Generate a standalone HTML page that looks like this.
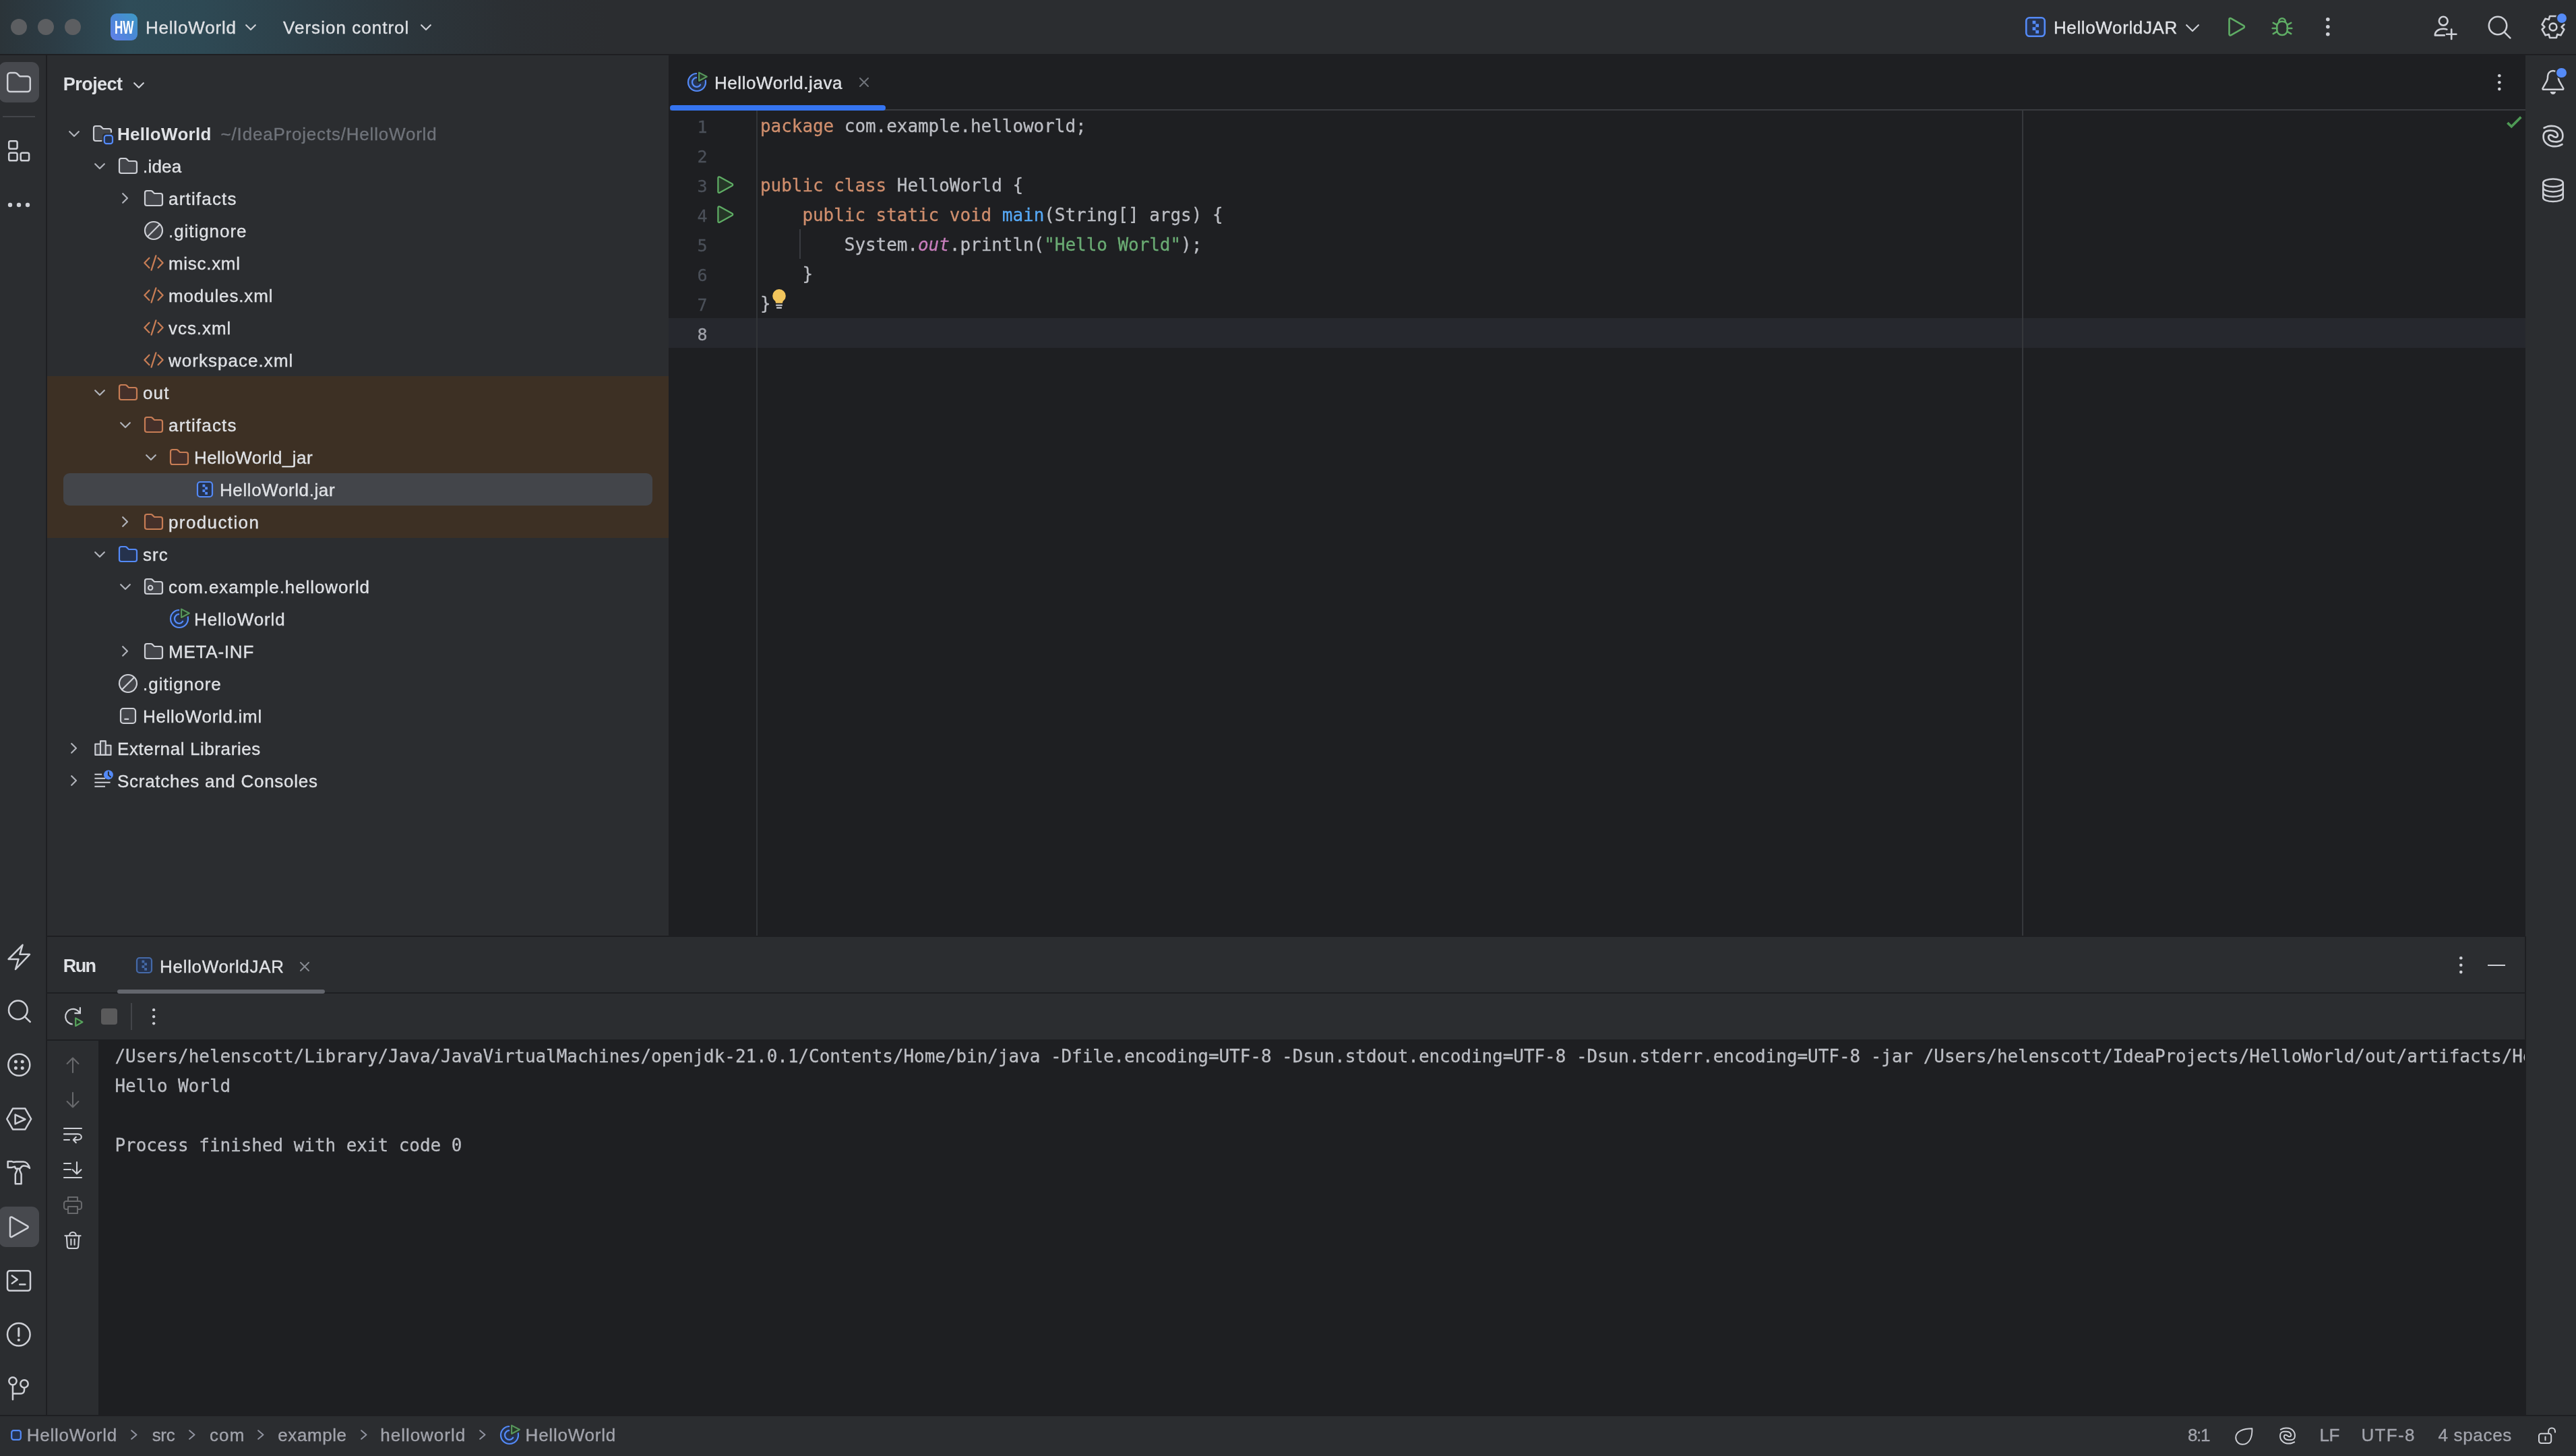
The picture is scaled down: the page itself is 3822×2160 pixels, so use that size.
<!DOCTYPE html>
<html lang="en"><head><meta charset="utf-8"><title>HelloWorld – HelloWorld.java</title>
<style>
html,body{margin:0;padding:0;}
body{width:3822px;height:2160px;background:#2b2d30;position:relative;overflow:hidden;font-family:'Liberation Sans', sans-serif;}
#r{position:absolute;left:0;top:0;width:3822px;height:2160px;will-change:transform;}
#r>div,#r>span,#r>svg{position:absolute;display:block;}
.t{white-space:pre;}
</style></head><body><div id="r">
<div style="left:0px;top:0px;width:3822px;height:80px;background:#2b2d30;background:linear-gradient(90deg,#2b3439 0px,#2c3c45 80px,#2f4c58 190px,#2e4954 300px,#2d3f48 450px,#2c363c 600px,#2b2f33 760px,#2b2d30 900px);"></div>
<div style="left:0px;top:80px;width:3822px;height:2px;background:#1e1f22;"></div>
<div style="left:68px;top:82px;width:2px;height:2018px;background:#1e1f22;"></div>
<div style="left:992px;top:82px;width:2755px;height:1308px;background:#1e1f22;"></div>
<div style="left:3746px;top:1389px;width:2px;height:711px;background:#1e1f22;"></div>
<div style="left:70px;top:1388px;width:3677px;height:2px;background:#1e1f22;"></div>
<div style="left:0px;top:2099px;width:3822px;height:2px;background:#1e1f22;"></div>
<div style="left:16px;top:28px;width:24px;height:24px;background:#5c5e61;border-radius:12px;"></div>
<div style="left:56px;top:28px;width:24px;height:24px;background:#5c5e61;border-radius:12px;"></div>
<div style="left:96px;top:28px;width:24px;height:24px;background:#5c5e61;border-radius:12px;"></div>
<div style="left:164px;top:20px;width:40px;height:40px;background:#4a86e0;border-radius:9px;background:linear-gradient(225deg,#3e9ac4 0%,#4a88d6 50%,#6380ea 100%);"></div>
<span id="t0" class="t" style="left:169.57px;top:20.8px;line-height:40px;font-size:27px;color:#ffffff;font-family:'Liberation Sans', sans-serif;font-weight:700;transform:scaleX(0.6337);transform-origin:0 0;">HW</span>
<span id="t1" class="t" style="left:215.90px;top:20.6px;line-height:40px;font-size:26px;color:#dfe1e5;font-family:'Liberation Sans', sans-serif;-webkit-text-stroke:0.35px;letter-spacing:0.821px;">HelloWorld</span>
<svg style="left:364.0px;top:35.5px;" width="16" height="10" viewBox="0 0 16 10" fill="none"><path d="M1.2 1.2 L7.999999999999999 8 L14.8 1.2" stroke="#ced0d6" stroke-width="2.2" stroke-linecap="round" stroke-linejoin="round"/></svg>
<span id="t2" class="t" style="left:420.00px;top:20.6px;line-height:40px;font-size:26px;color:#dfe1e5;font-family:'Liberation Sans', sans-serif;-webkit-text-stroke:0.35px;letter-spacing:1.028px;">Version control</span>
<svg style="left:624.0px;top:35.5px;" width="16" height="10" viewBox="0 0 16 10" fill="none"><path d="M1.2 1.2 L7.999999999999999 8 L14.8 1.2" stroke="#ced0d6" stroke-width="2.2" stroke-linecap="round" stroke-linejoin="round"/></svg>
<svg style="left:3000px;top:20px;" width="40" height="40" viewBox="0 0 16 16" fill="none"><rect x="2.5" y="2.5" width="11" height="11" rx="2" fill="#25324d" stroke="#548af7" stroke-width="1.05"/><rect x="6.25" y="4.3" width="1.9" height="1.9" fill="#548af7"/><rect x="8.1" y="6.2" width="1.9" height="1.9" fill="#548af7"/><rect x="6.25" y="8.1" width="1.9" height="1.9" fill="#548af7"/><rect x="8.1" y="9.95" width="1.9" height="1.9" fill="#548af7"/></svg>
<span id="t3" class="t" style="left:3046.90px;top:20.6px;line-height:40px;font-size:26px;color:#dfe1e5;font-family:'Liberation Sans', sans-serif;-webkit-text-stroke:0.35px;letter-spacing:0.640px;">HelloWorldJAR</span>
<svg style="left:3242.5px;top:35.5px;" width="20" height="12" viewBox="0 0 20 12" fill="none"><path d="M1.2 1.2 L10.0 10 L18.8 1.2" stroke="#ced0d6" stroke-width="2.2" stroke-linecap="round" stroke-linejoin="round"/></svg>
<svg style="left:3299px;top:20px;" width="40" height="40" viewBox="0 0 20 20" fill="none"><path d="M4.25 4.4 C4.25 3.7 5 3.3 5.6 3.65 L15 9.1 C15.6 9.45 15.6 10.3 15 10.65 L5.6 16.1 C5 16.45 4.25 16.05 4.25 15.35 Z" stroke="#5fad65" stroke-width="1.3" stroke-linejoin="round"/></svg>
<svg style="left:3366px;top:20px;" width="40" height="40" viewBox="0 0 20 20" fill="none"><g stroke="#5fad65" stroke-width="1.4" stroke-linecap="round" fill="none" transform="translate(10 10) scale(0.92) translate(-10 -10.1)"><path d="M5.8 9.6 C5.8 7.2 7.6 5.6 10 5.6 C12.4 5.6 14.2 7.2 14.2 9.6 V12.4 C14.2 14.9 12.4 16.6 10 16.6 C7.6 16.6 5.8 14.9 5.8 12.4 Z"/><path d="M7.4 5.9 C7.4 4.3 8.5 3.2 10 3.2 C11.5 3.2 12.6 4.3 12.6 5.9"/><path d="M5.8 8.4 L2.8 6.8 M5.8 11.2 H2.2 M5.8 13.8 L2.8 15.6 M14.2 8.4 L17.2 6.8 M14.2 11.2 H17.8 M14.2 13.8 L17.2 15.6"/></g></svg>
<svg style="left:3449.8999999999996px;top:25.400000000000002px;" width="7.6" height="29.6" viewBox="0 0 7.6 29.6" fill="none"><circle cx="3.8" cy="3.8" r="2.8" fill="#ced0d6"/><circle cx="3.8" cy="14.8" r="2.8" fill="#ced0d6"/><circle cx="3.8" cy="25.8" r="2.8" fill="#ced0d6"/></svg>
<svg style="left:3608px;top:20px;" width="40" height="40" viewBox="0 0 20 20" fill="none"><g stroke="#ced0d6" stroke-width="1.3" stroke-linecap="round" fill="none"><circle cx="8.6" cy="5.6" r="3.2"/><path d="M2.4 16.2 C2.4 13.2 5 11.4 8.6 11.4 C9.6 11.4 10.4 11.5 11.2 11.8 M2.4 16.2 H9.4"/><path d="M14.6 11.8 V19 M11 15.4 H18.2"/></g></svg>
<svg style="left:3688px;top:20px;" width="40" height="40" viewBox="0 0 20 20" fill="none"><g stroke="#ced0d6" stroke-width="1.3" stroke-linecap="round" fill="none"><circle cx="9" cy="9" r="6.6"/><path d="M13.9 13.9 L18.2 18.2"/></g></svg>
<svg style="left:3768px;top:20px;" width="40" height="40" viewBox="0 0 20 20" fill="none"><g stroke="#ced0d6" stroke-width="1.3" stroke-linejoin="round" fill="none"><path d="M7.52 1.98 L12.48 1.98 L13.13 4.53 L13.17 4.56 L15.71 3.84 L18.19 8.14 L16.30 9.98 L16.30 10.02 L18.19 11.86 L15.71 16.16 L13.17 15.44 L13.13 15.47 L12.48 18.02 L7.52 18.02 L6.87 15.47 L6.83 15.44 L4.29 16.16 L1.81 11.86 L3.70 10.02 L3.70 9.98 L1.81 8.14 L4.29 3.84 L6.83 4.56 L6.87 4.53 Z"/><circle cx="10" cy="10" r="2.7"/></g></svg>
<div style="left:3793.7px;top:19.7px;width:14.4px;height:14.4px;background:#548af7;border-radius:20px;border:2px solid #2b2d30;box-sizing:content-box;margin:-2px;"></div>
<div style="left:-2px;top:92px;width:60px;height:60px;background:#47494e;border-radius:11px;"></div>
<svg style="left:8px;top:102px;" width="40" height="40" viewBox="0 0 20 20" fill="none"><g stroke="#ced0d6" stroke-width="1.25" stroke-linecap="round" stroke-linejoin="round" fill="none" ><path d="M1.6 5 C1.6 3.9 2.5 3 3.6 3 H7.1 C7.7 3 8.2 3.2 8.6 3.6 L10.6 5.6 H16.4 C17.5 5.6 18.4 6.5 18.4 7.6 V15 C18.4 16.1 17.5 17 16.4 17 H3.6 C2.5 17 1.6 16.1 1.6 15 Z"/></g></svg>
<div style="left:4px;top:172px;width:48px;height:2px;background:#43454a;"></div>
<svg style="left:8px;top:204px;" width="40" height="40" viewBox="0 0 20 20" fill="none"><g stroke="#ced0d6" stroke-width="1.25" stroke-linecap="round" stroke-linejoin="round" fill="none" ><rect x="2.6" y="2.6" width="6.2" height="5.8" rx="1.2"/><rect x="2.6" y="11.35" width="6.2" height="5.8" rx="1.2"/><rect x="11.35" y="11.35" width="6.2" height="5.8" rx="1.2"/></g></svg>
<svg style="left:11px;top:299.75px;" width="34" height="8" viewBox="0 0 34 8" fill="none"><circle cx="4" cy="4" r="3.2" fill="#ced0d6"/><circle cx="17" cy="4" r="3.2" fill="#ced0d6"/><circle cx="30" cy="4" r="3.2" fill="#ced0d6"/></svg>
<svg style="left:8px;top:1400px;" width="40" height="40" viewBox="0 0 20 20" fill="none"><g stroke="#ced0d6" stroke-width="1.25" stroke-linecap="round" stroke-linejoin="round" fill="none" ><path d="M12.75 0.9 L2.3 11.5 H9.7 L7.5 19 L18 7.9 H10.7 Z"/></g></svg>
<svg style="left:8px;top:1480px;" width="40" height="40" viewBox="0 0 20 20" fill="none"><g stroke="#ced0d6" stroke-width="1.25" stroke-linecap="round" stroke-linejoin="round" fill="none" ><circle cx="9.4" cy="9.2" r="6.9"/><path d="M14.3 14.1 L18.4 18"/></g></svg>
<svg style="left:8px;top:1560px;" width="40" height="40" viewBox="0 0 20 20" fill="none"><g stroke="#ced0d6" stroke-width="1.25" stroke-linecap="round" stroke-linejoin="round" fill="none" ><circle cx="10.15" cy="9.85" r="8"/><circle cx="7.7" cy="7.449999999999999" r="1.25" fill="#ced0d6" stroke="none"/><circle cx="7.7" cy="12.25" r="1.25" fill="#ced0d6" stroke="none"/><circle cx="12.600000000000001" cy="7.449999999999999" r="1.25" fill="#ced0d6" stroke="none"/><circle cx="12.600000000000001" cy="12.25" r="1.25" fill="#ced0d6" stroke="none"/></g></svg>
<svg style="left:8px;top:1640px;" width="40" height="40" viewBox="0 0 20 20" fill="none"><g stroke="#ced0d6" stroke-width="1.25" stroke-linecap="round" stroke-linejoin="round" fill="none" ><path d="M1.1 10 L5.5 2.3 H14.7 L19.1 10 L14.7 17.7 H5.5 Z"/><path d="M7.3 6.8 V13.7 L14.7 10.25 Z"/></g></svg>
<svg style="left:8px;top:1720px;" width="40" height="40" viewBox="0 0 20 20" fill="none"><g stroke="#ced0d6" stroke-width="1.25" stroke-linecap="round" stroke-linejoin="round" fill="none" ><path d="M1.8 1.55 H4.8 L5.9 1.95 L8.1 1.7 H13.3 C15.4 1.7 17.3 3.6 18 6.5 C16.8 5.2 15.3 4.7 13.6 4.7 C12.7 4.7 12 5.2 11.5 6 L10.9 6.9 H7.6 L7 5.4 L4.8 5.95 H1.8 Z"/><path d="M8.7 6.9 V7.9 L7.4 10.9 V18.15 H11.8 V10.9 L10.55 7.9 V6.9"/></g></svg>
<div style="left:-2px;top:1790px;width:60px;height:60px;background:#47494e;border-radius:11px;"></div>
<svg style="left:8px;top:1800px;" width="40" height="40" viewBox="0 0 20 20" fill="none"><g stroke="#ced0d6" stroke-width="1.25" stroke-linecap="round" stroke-linejoin="round" fill="none" ><path d="M3.5 3.6 C3.5 2.9 4.2 2.5 4.8 2.85 L16.4 9.4 C17 9.75 17 10.55 16.4 10.9 L4.8 17.45 C4.2 17.8 3.5 17.4 3.5 16.7 Z"/></g></svg>
<svg style="left:8px;top:1880px;" width="40" height="40" viewBox="0 0 20 20" fill="none"><g stroke="#ced0d6" stroke-width="1.25" stroke-linecap="round" stroke-linejoin="round" fill="none" ><rect x="1.5" y="2.6" width="17" height="14.8" rx="1.8"/><path d="M4.9 6.2 L8.9 9.1 L4.9 12 M10.6 12.8 H14.7"/></g></svg>
<svg style="left:8px;top:1960px;" width="40" height="40" viewBox="0 0 20 20" fill="none"><g stroke="#ced0d6" stroke-width="1.25" stroke-linecap="round" stroke-linejoin="round" fill="none" ><circle cx="9.9" cy="9.85" r="8.4"/><path d="M9.9 5.3 V11" stroke-width="1.5"/><circle cx="9.9" cy="14" r="1.05" fill="#ced0d6" stroke="none"/></g></svg>
<svg style="left:8px;top:2040px;" width="40" height="40" viewBox="0 0 20 20" fill="none"><g stroke="#ced0d6" stroke-width="1.25" stroke-linecap="round" stroke-linejoin="round" fill="none" ><circle cx="5.48" cy="4.42" r="2.85"/><circle cx="14" cy="6.48" r="2.85"/><path d="M5.48 7.4 V18.1 M14 9.45 V11.3 A2.45 2.45 0 0 1 11.55 13.76 H5.6"/></g></svg>
<svg style="left:3768px;top:102px;" width="40" height="40" viewBox="0 0 20 20" fill="none"><g stroke="#ced0d6" stroke-width="1.25" stroke-linecap="round" stroke-linejoin="round" fill="none" ><path d="M2.9 15.4 H17 C17.5 15.4 17.8 14.9 17.6 14.5 L14.6 9.2 C14.1 8.2 13.9 7.4 13.9 6.4 V5.5 A3.95 3.95 0 0 0 6.0 5.5 V6.4 C6 7.4 5.8 8.2 5.3 9.2 L2.3 14.5 C2.1 14.9 2.4 15.4 2.9 15.4 Z"/><path d="M7.8 17 H12.1 C11.8 18.3 11 19.05 9.95 19.05 C8.9 19.05 8.1 18.3 7.8 17 Z" fill="#ced0d6" stroke="none"/></g></svg>
<div style="left:3793.9px;top:101.8px;width:14.2px;height:14.2px;background:#548af7;border-radius:20px;border:2.5px solid #2b2d30;box-sizing:content-box;margin:-2.5px;"></div>
<svg style="left:3768px;top:182px;" width="40" height="40" viewBox="0 0 20 20" fill="none"><g stroke="#ced0d6" stroke-width="1.25" stroke-linecap="round" stroke-linejoin="round" fill="none" ><path d="M3.30 3.89 C3.75 3.71 5.12 3.01 5.98 2.77 C6.85 2.52 7.62 2.43 8.48 2.41 C9.35 2.39 10.27 2.43 11.16 2.64 C12.05 2.86 13.07 3.25 13.84 3.71 C14.61 4.18 15.29 4.77 15.80 5.41 C16.32 6.05 16.68 6.81 16.91 7.55 C17.14 8.30 17.20 9.13 17.18 9.88 C17.16 10.62 17.06 11.42 16.79 12.02 C16.51 12.61 16.09 13.10 15.54 13.45 C14.99 13.79 14.21 13.96 13.48 14.07 C12.75 14.18 11.90 14.17 11.16 14.12 C10.42 14.08 9.63 14.02 9.02 13.80 C8.41 13.59 7.90 13.24 7.50 12.82 C7.10 12.40 6.77 11.79 6.64 11.30 C6.52 10.82 6.58 10.26 6.75 9.91 C6.92 9.56 7.32 9.31 7.68 9.21 C8.04 9.12 8.54 9.21 8.93 9.34 C9.32 9.47 9.82 9.89 10.00 10.00 M16.70 16.11 C16.25 16.29 14.88 16.99 14.02 17.23 C13.15 17.48 12.38 17.57 11.52 17.59 C10.65 17.61 9.73 17.57 8.84 17.36 C7.95 17.14 6.93 16.75 6.16 16.29 C5.39 15.82 4.71 15.23 4.20 14.59 C3.68 13.95 3.32 13.19 3.09 12.45 C2.86 11.70 2.80 10.87 2.82 10.12 C2.84 9.38 2.94 8.58 3.21 7.98 C3.49 7.39 3.91 6.90 4.46 6.55 C5.01 6.21 5.79 6.04 6.52 5.93 C7.25 5.82 8.10 5.83 8.84 5.88 C9.58 5.92 10.37 5.98 10.98 6.20 C11.59 6.41 12.10 6.76 12.50 7.18 C12.90 7.60 13.23 8.21 13.36 8.70 C13.48 9.18 13.42 9.74 13.25 10.09 C13.08 10.44 12.68 10.69 12.32 10.79 C11.96 10.88 11.46 10.79 11.07 10.66 C10.68 10.53 10.18 10.11 10.00 10.00" stroke-width="1.35"/></g></svg>
<svg style="left:3768px;top:262px;" width="40" height="40" viewBox="0 0 20 20" fill="none"><g stroke="#ced0d6" stroke-width="1.25" stroke-linecap="round" stroke-linejoin="round" fill="none" ><ellipse cx="10" cy="4.6" rx="7.4" ry="2.9"/><path d="M2.6 4.6 V15.6 C2.6 17.2 5.9 18.5 10 18.5 C14.1 18.5 17.4 17.2 17.4 15.6 V4.6"/><path d="M2.6 8.3 C2.6 9.9 5.9 11.2 10 11.2 C14.1 11.2 17.4 9.9 17.4 8.3 M2.6 12 C2.6 13.6 5.9 14.9 10 14.9 C14.1 14.9 17.4 13.6 17.4 12"/></g></svg>
<span id="t4" class="t" style="left:93.80px;top:105.0px;line-height:40px;font-size:27px;color:#dfe1e5;font-family:'Liberation Sans', sans-serif;font-weight:700;letter-spacing:-0.557px;">Project</span>
<svg style="left:197.7px;top:121.5px;" width="16" height="10" viewBox="0 0 16 10" fill="none"><path d="M1.2 1.2 L7.999999999999999 8 L14.8 1.2" stroke="#ced0d6" stroke-width="2.2" stroke-linecap="round" stroke-linejoin="round"/></svg>
<div style="left:70px;top:558px;width:922px;height:240px;background:#3d3024;"></div>
<div style="left:94px;top:702px;width:874px;height:48px;background:#43454a;border-radius:9px;"></div>
<svg style="left:102.0px;top:193.8px;" width="16" height="10" viewBox="0 0 16 10" fill="none"><path d="M1.2 1.2 L7.999999999999999 8 L14.8 1.2" stroke="#b0b3ba" stroke-width="2.2" stroke-linecap="round" stroke-linejoin="round"/></svg>
<svg style="left:135.5px;top:182px;overflow:visible;" width="32" height="32" viewBox="0 0 16 16" fill="none"><path d="M8 13.5 H3 C2.17 13.5 1.5 12.83 1.5 12 V4 C1.5 3.17 2.17 2.5 3 2.5 H5.9 C6.3 2.5 6.65 2.65 6.95 2.95 L8.5 4.5 H13 C13.83 4.5 14.5 5.17 14.5 6 V8 H10 C8.9 8 8 8.9 8 10 Z" fill="#43454a"/><path d="M7.2 13.5 H3 C2.17 13.5 1.5 12.83 1.5 12 V4 C1.5 3.17 2.17 2.5 3 2.5 H5.9 C6.3 2.5 6.65 2.65 6.95 2.95 L8.5 4.5 H13 C13.83 4.5 14.5 5.17 14.5 6 V7" stroke="#ced0d6" stroke-width="1.1" stroke-linecap="round"/><rect x="9.4" y="9.45" width="6.1" height="6.1" rx="1.6" fill="#25324d" stroke="#548af7" stroke-width="1.1"/></svg>
<span id="t5" class="t" style="left:174.00px;top:179.0px;line-height:40px;font-size:26px;color:#dfe1e5;font-family:'Liberation Sans', sans-serif;font-weight:700;letter-spacing:0.293px;">HelloWorld</span>
<span id="t6" class="t" style="left:327.60px;top:179.0px;line-height:40px;font-size:26px;color:#6f737a;font-family:'Liberation Sans', sans-serif;-webkit-text-stroke:0.35px;letter-spacing:0.801px;">~/IdeaProjects/HelloWorld</span>
<svg style="left:140.0px;top:241.8px;" width="16" height="10" viewBox="0 0 16 10" fill="none"><path d="M1.2 1.2 L7.999999999999999 8 L14.8 1.2" stroke="#b0b3ba" stroke-width="2.2" stroke-linecap="round" stroke-linejoin="round"/></svg>
<svg style="left:173.5px;top:230px;overflow:visible;" width="32" height="32" viewBox="0 0 16 16" fill="none"><path d="M1.5 4 C1.5 3.17 2.17 2.5 3 2.5 H5.9 C6.3 2.5 6.65 2.65 6.95 2.95 L8.5 4.5 H13 C13.83 4.5 14.5 5.17 14.5 6 V12 C14.5 12.83 13.83 13.5 13 13.5 H3 C2.17 13.5 1.5 12.83 1.5 12 Z" fill="#43454a" stroke="#ced0d6" stroke-width="1.1"/></svg>
<span id="t7" class="t" style="left:212.00px;top:227.0px;line-height:40px;font-size:26px;color:#dfe1e5;font-family:'Liberation Sans', sans-serif;-webkit-text-stroke:0.35px;letter-spacing:0.220px;">.idea</span>
<svg style="left:180.5px;top:286.0px;" width="10" height="16" viewBox="0 0 10 16" fill="none"><path d="M1.2 1.2 L8 8.0 L1.2 14.8" stroke="#b0b3ba" stroke-width="2.2" stroke-linecap="round" stroke-linejoin="round"/></svg>
<svg style="left:211.5px;top:278px;overflow:visible;" width="32" height="32" viewBox="0 0 16 16" fill="none"><path d="M1.5 4 C1.5 3.17 2.17 2.5 3 2.5 H5.9 C6.3 2.5 6.65 2.65 6.95 2.95 L8.5 4.5 H13 C13.83 4.5 14.5 5.17 14.5 6 V12 C14.5 12.83 13.83 13.5 13 13.5 H3 C2.17 13.5 1.5 12.83 1.5 12 Z" fill="#43454a" stroke="#ced0d6" stroke-width="1.1"/></svg>
<span id="t8" class="t" style="left:250.00px;top:275.0px;line-height:40px;font-size:26px;color:#dfe1e5;font-family:'Liberation Sans', sans-serif;-webkit-text-stroke:0.35px;letter-spacing:1.184px;">artifacts</span>
<svg style="left:211.5px;top:326px;overflow:visible;" width="32" height="32" viewBox="0 0 16 16" fill="none"><circle cx="8" cy="8" r="6.5" fill="#43454a" stroke="#ced0d6" stroke-width="1.1"/><path d="M3.5 12.5 L12.5 3.5" stroke="#ced0d6" stroke-width="1.1"/></svg>
<span id="t9" class="t" style="left:250.00px;top:323.0px;line-height:40px;font-size:26px;color:#dfe1e5;font-family:'Liberation Sans', sans-serif;-webkit-text-stroke:0.35px;letter-spacing:0.945px;">.gitignore</span>
<svg style="left:211.5px;top:374px;overflow:visible;" width="32" height="32" viewBox="0 0 16 16" fill="none"><path d="M4.7 4.4 L1.2 8 L4.7 11.6 M9.7 2.7 L6.3 13.3 M11.3 4.4 L14.8 8 L11.3 11.6" stroke="#c77d55" stroke-width="1.15" stroke-linecap="round" stroke-linejoin="round"/></svg>
<span id="t10" class="t" style="left:250.00px;top:371.0px;line-height:40px;font-size:26px;color:#dfe1e5;font-family:'Liberation Sans', sans-serif;-webkit-text-stroke:0.35px;letter-spacing:0.698px;">misc.xml</span>
<svg style="left:211.5px;top:422px;overflow:visible;" width="32" height="32" viewBox="0 0 16 16" fill="none"><path d="M4.7 4.4 L1.2 8 L4.7 11.6 M9.7 2.7 L6.3 13.3 M11.3 4.4 L14.8 8 L11.3 11.6" stroke="#c77d55" stroke-width="1.15" stroke-linecap="round" stroke-linejoin="round"/></svg>
<span id="t11" class="t" style="left:250.00px;top:419.0px;line-height:40px;font-size:26px;color:#dfe1e5;font-family:'Liberation Sans', sans-serif;-webkit-text-stroke:0.35px;letter-spacing:0.854px;">modules.xml</span>
<svg style="left:211.5px;top:470px;overflow:visible;" width="32" height="32" viewBox="0 0 16 16" fill="none"><path d="M4.7 4.4 L1.2 8 L4.7 11.6 M9.7 2.7 L6.3 13.3 M11.3 4.4 L14.8 8 L11.3 11.6" stroke="#c77d55" stroke-width="1.15" stroke-linecap="round" stroke-linejoin="round"/></svg>
<span id="t12" class="t" style="left:250.00px;top:467.0px;line-height:40px;font-size:26px;color:#dfe1e5;font-family:'Liberation Sans', sans-serif;-webkit-text-stroke:0.35px;letter-spacing:0.953px;">vcs.xml</span>
<svg style="left:211.5px;top:518px;overflow:visible;" width="32" height="32" viewBox="0 0 16 16" fill="none"><path d="M4.7 4.4 L1.2 8 L4.7 11.6 M9.7 2.7 L6.3 13.3 M11.3 4.4 L14.8 8 L11.3 11.6" stroke="#c77d55" stroke-width="1.15" stroke-linecap="round" stroke-linejoin="round"/></svg>
<span id="t13" class="t" style="left:250.00px;top:515.0px;line-height:40px;font-size:26px;color:#dfe1e5;font-family:'Liberation Sans', sans-serif;-webkit-text-stroke:0.35px;letter-spacing:1.037px;">workspace.xml</span>
<svg style="left:140.0px;top:577.8px;" width="16" height="10" viewBox="0 0 16 10" fill="none"><path d="M1.2 1.2 L7.999999999999999 8 L14.8 1.2" stroke="#b0b3ba" stroke-width="2.2" stroke-linecap="round" stroke-linejoin="round"/></svg>
<svg style="left:173.5px;top:566px;overflow:visible;" width="32" height="32" viewBox="0 0 16 16" fill="none"><path d="M1.5 4 C1.5 3.17 2.17 2.5 3 2.5 H5.9 C6.3 2.5 6.65 2.65 6.95 2.95 L8.5 4.5 H13 C13.83 4.5 14.5 5.17 14.5 6 V12 C14.5 12.83 13.83 13.5 13 13.5 H3 C2.17 13.5 1.5 12.83 1.5 12 Z" fill="#45302a" stroke="#c77d55" stroke-width="1.1"/></svg>
<span id="t14" class="t" style="left:212.00px;top:563.0px;line-height:40px;font-size:26px;color:#dfe1e5;font-family:'Liberation Sans', sans-serif;-webkit-text-stroke:0.35px;letter-spacing:1.140px;">out</span>
<svg style="left:178.0px;top:625.8px;" width="16" height="10" viewBox="0 0 16 10" fill="none"><path d="M1.2 1.2 L7.999999999999999 8 L14.8 1.2" stroke="#b0b3ba" stroke-width="2.2" stroke-linecap="round" stroke-linejoin="round"/></svg>
<svg style="left:211.5px;top:614px;overflow:visible;" width="32" height="32" viewBox="0 0 16 16" fill="none"><path d="M1.5 4 C1.5 3.17 2.17 2.5 3 2.5 H5.9 C6.3 2.5 6.65 2.65 6.95 2.95 L8.5 4.5 H13 C13.83 4.5 14.5 5.17 14.5 6 V12 C14.5 12.83 13.83 13.5 13 13.5 H3 C2.17 13.5 1.5 12.83 1.5 12 Z" fill="#45302a" stroke="#c77d55" stroke-width="1.1"/></svg>
<span id="t15" class="t" style="left:250.00px;top:611.0px;line-height:40px;font-size:26px;color:#dfe1e5;font-family:'Liberation Sans', sans-serif;-webkit-text-stroke:0.35px;letter-spacing:1.184px;">artifacts</span>
<svg style="left:216.0px;top:673.8px;" width="16" height="10" viewBox="0 0 16 10" fill="none"><path d="M1.2 1.2 L7.999999999999999 8 L14.8 1.2" stroke="#b0b3ba" stroke-width="2.2" stroke-linecap="round" stroke-linejoin="round"/></svg>
<svg style="left:249.5px;top:662px;overflow:visible;" width="32" height="32" viewBox="0 0 16 16" fill="none"><path d="M1.5 4 C1.5 3.17 2.17 2.5 3 2.5 H5.9 C6.3 2.5 6.65 2.65 6.95 2.95 L8.5 4.5 H13 C13.83 4.5 14.5 5.17 14.5 6 V12 C14.5 12.83 13.83 13.5 13 13.5 H3 C2.17 13.5 1.5 12.83 1.5 12 Z" fill="#45302a" stroke="#c77d55" stroke-width="1.1"/></svg>
<span id="t16" class="t" style="left:288.00px;top:659.0px;line-height:40px;font-size:26px;color:#dfe1e5;font-family:'Liberation Sans', sans-serif;-webkit-text-stroke:0.35px;letter-spacing:0.425px;">HelloWorld_jar</span>
<svg style="left:287.5px;top:710px;overflow:visible;" width="32" height="32" viewBox="0 0 16 16" fill="none"><rect x="2.5" y="2.5" width="11" height="11" rx="2" fill="#25324d" stroke="#548af7" stroke-width="1.1"/><rect x="6.25" y="4.3" width="1.9" height="1.9" fill="#548af7"/><rect x="8.1" y="6.2" width="1.9" height="1.9" fill="#548af7"/><rect x="6.25" y="8.1" width="1.9" height="1.9" fill="#548af7"/><rect x="8.1" y="9.95" width="1.9" height="1.9" fill="#548af7"/></svg>
<span id="t17" class="t" style="left:326.00px;top:707.0px;line-height:40px;font-size:26px;color:#dfe1e5;font-family:'Liberation Sans', sans-serif;-webkit-text-stroke:0.35px;letter-spacing:0.597px;">HelloWorld.jar</span>
<svg style="left:180.5px;top:766.0px;" width="10" height="16" viewBox="0 0 10 16" fill="none"><path d="M1.2 1.2 L8 8.0 L1.2 14.8" stroke="#b0b3ba" stroke-width="2.2" stroke-linecap="round" stroke-linejoin="round"/></svg>
<svg style="left:211.5px;top:758px;overflow:visible;" width="32" height="32" viewBox="0 0 16 16" fill="none"><path d="M1.5 4 C1.5 3.17 2.17 2.5 3 2.5 H5.9 C6.3 2.5 6.65 2.65 6.95 2.95 L8.5 4.5 H13 C13.83 4.5 14.5 5.17 14.5 6 V12 C14.5 12.83 13.83 13.5 13 13.5 H3 C2.17 13.5 1.5 12.83 1.5 12 Z" fill="#45302a" stroke="#c77d55" stroke-width="1.1"/></svg>
<span id="t18" class="t" style="left:250.00px;top:755.0px;line-height:40px;font-size:26px;color:#dfe1e5;font-family:'Liberation Sans', sans-serif;-webkit-text-stroke:0.35px;letter-spacing:1.382px;">production</span>
<svg style="left:140.0px;top:817.8px;" width="16" height="10" viewBox="0 0 16 10" fill="none"><path d="M1.2 1.2 L7.999999999999999 8 L14.8 1.2" stroke="#b0b3ba" stroke-width="2.2" stroke-linecap="round" stroke-linejoin="round"/></svg>
<svg style="left:173.5px;top:806px;overflow:visible;" width="32" height="32" viewBox="0 0 16 16" fill="none"><path d="M1.5 4 C1.5 3.17 2.17 2.5 3 2.5 H5.9 C6.3 2.5 6.65 2.65 6.95 2.95 L8.5 4.5 H13 C13.83 4.5 14.5 5.17 14.5 6 V12 C14.5 12.83 13.83 13.5 13 13.5 H3 C2.17 13.5 1.5 12.83 1.5 12 Z" fill="#25324d" stroke="#548af7" stroke-width="1.1"/></svg>
<span id="t19" class="t" style="left:212.00px;top:803.0px;line-height:40px;font-size:26px;color:#dfe1e5;font-family:'Liberation Sans', sans-serif;-webkit-text-stroke:0.35px;letter-spacing:1.071px;">src</span>
<svg style="left:178.0px;top:865.8px;" width="16" height="10" viewBox="0 0 16 10" fill="none"><path d="M1.2 1.2 L7.999999999999999 8 L14.8 1.2" stroke="#b0b3ba" stroke-width="2.2" stroke-linecap="round" stroke-linejoin="round"/></svg>
<svg style="left:211.5px;top:854px;overflow:visible;" width="32" height="32" viewBox="0 0 16 16" fill="none"><path d="M1.5 4 C1.5 3.17 2.17 2.5 3 2.5 H5.9 C6.3 2.5 6.65 2.65 6.95 2.95 L8.5 4.5 H13 C13.83 4.5 14.5 5.17 14.5 6 V12 C14.5 12.83 13.83 13.5 13 13.5 H3 C2.17 13.5 1.5 12.83 1.5 12 Z" fill="#43454a" stroke="#ced0d6" stroke-width="1.1"/><circle cx="5.6" cy="9" r="1.6" stroke="#ced0d6" stroke-width="1.05"/></svg>
<span id="t20" class="t" style="left:250.00px;top:851.0px;line-height:40px;font-size:26px;color:#dfe1e5;font-family:'Liberation Sans', sans-serif;-webkit-text-stroke:0.35px;letter-spacing:0.912px;">com.example.helloworld</span>
<svg style="left:249.5px;top:902px;overflow:visible;" width="32" height="32" viewBox="0 0 16 16" fill="none"><circle cx="8" cy="8" r="6.5" fill="#25324d" stroke="#548af7" stroke-width="1.1"/><path d="M10.55 6.1 A3.3 3.45 0 1 0 10.55 9.9" stroke="#548af7" stroke-width="1.15" stroke-linecap="round"/><path d="M9.55 0.8 V7.0 L15.4 3.9 Z" fill="#253627" stroke="#2b2d30" stroke-width="3" stroke-linejoin="round"/><path d="M9.55 0.8 V7.0 L15.4 3.9 Z" fill="#253627" stroke="#57965c" stroke-width="1.05" stroke-linejoin="round"/></svg>
<span id="t21" class="t" style="left:288.00px;top:899.0px;line-height:40px;font-size:26px;color:#dfe1e5;font-family:'Liberation Sans', sans-serif;-webkit-text-stroke:0.35px;letter-spacing:0.887px;">HelloWorld</span>
<svg style="left:180.5px;top:958.0px;" width="10" height="16" viewBox="0 0 10 16" fill="none"><path d="M1.2 1.2 L8 8.0 L1.2 14.8" stroke="#b0b3ba" stroke-width="2.2" stroke-linecap="round" stroke-linejoin="round"/></svg>
<svg style="left:211.5px;top:950px;overflow:visible;" width="32" height="32" viewBox="0 0 16 16" fill="none"><path d="M1.5 4 C1.5 3.17 2.17 2.5 3 2.5 H5.9 C6.3 2.5 6.65 2.65 6.95 2.95 L8.5 4.5 H13 C13.83 4.5 14.5 5.17 14.5 6 V12 C14.5 12.83 13.83 13.5 13 13.5 H3 C2.17 13.5 1.5 12.83 1.5 12 Z" fill="#43454a" stroke="#ced0d6" stroke-width="1.1"/></svg>
<span id="t22" class="t" style="left:250.00px;top:947.0px;line-height:40px;font-size:26px;color:#dfe1e5;font-family:'Liberation Sans', sans-serif;-webkit-text-stroke:0.35px;letter-spacing:0.778px;">META-INF</span>
<svg style="left:173.5px;top:998px;overflow:visible;" width="32" height="32" viewBox="0 0 16 16" fill="none"><circle cx="8" cy="8" r="6.5" fill="#43454a" stroke="#ced0d6" stroke-width="1.1"/><path d="M3.5 12.5 L12.5 3.5" stroke="#ced0d6" stroke-width="1.1"/></svg>
<span id="t23" class="t" style="left:212.00px;top:995.0px;line-height:40px;font-size:26px;color:#dfe1e5;font-family:'Liberation Sans', sans-serif;-webkit-text-stroke:0.35px;letter-spacing:0.978px;">.gitignore</span>
<svg style="left:173.5px;top:1046px;overflow:visible;" width="32" height="32" viewBox="0 0 16 16" fill="none"><rect x="2.5" y="2.5" width="11" height="11" rx="2" fill="#43454a" stroke="#ced0d6" stroke-width="1.1"/><path d="M5.2 10.4 H8.6" stroke="#ced0d6" stroke-width="1.1"/></svg>
<span id="t24" class="t" style="left:212.00px;top:1043.0px;line-height:40px;font-size:26px;color:#dfe1e5;font-family:'Liberation Sans', sans-serif;-webkit-text-stroke:0.35px;letter-spacing:0.698px;">HelloWorld.iml</span>
<svg style="left:104.5px;top:1102.0px;" width="10" height="16" viewBox="0 0 10 16" fill="none"><path d="M1.2 1.2 L8 8.0 L1.2 14.8" stroke="#b0b3ba" stroke-width="2.2" stroke-linecap="round" stroke-linejoin="round"/></svg>
<svg style="left:135.5px;top:1094px;overflow:visible;" width="32" height="32" viewBox="0 0 16 16" fill="none"><g stroke="#ced0d6" stroke-width="1.05" fill="#43454a" stroke-linejoin="round"><rect x="2.65" y="4.9" width="3.85" height="8.05"/><rect x="6.5" y="2.7" width="3.9" height="10.25"/><rect x="10.4" y="5.9" width="3.85" height="7.05"/></g></svg>
<span id="t25" class="t" style="left:174.00px;top:1091.0px;line-height:40px;font-size:26px;color:#dfe1e5;font-family:'Liberation Sans', sans-serif;-webkit-text-stroke:0.35px;letter-spacing:0.588px;">External Libraries</span>
<svg style="left:104.5px;top:1150.0px;" width="10" height="16" viewBox="0 0 10 16" fill="none"><path d="M1.2 1.2 L8 8.0 L1.2 14.8" stroke="#b0b3ba" stroke-width="2.2" stroke-linecap="round" stroke-linejoin="round"/></svg>
<svg style="left:135.5px;top:1142px;overflow:visible;" width="32" height="32" viewBox="0 0 16 16" fill="none"><path d="M2.2 3.4 H7.6 M2.2 6.4 H10 M2.2 9.4 H13.8 M2.2 12.4 H10" stroke="#ced0d6" stroke-width="1.05"/><circle cx="12.45" cy="3.7" r="3.5" fill="#548af7"/><path d="M12.45 1.6 V3.9 L14 5.2" stroke="#2b2d30" stroke-width="1" stroke-linecap="round" stroke-linejoin="round"/></svg>
<span id="t26" class="t" style="left:174.00px;top:1139.0px;line-height:40px;font-size:26px;color:#dfe1e5;font-family:'Liberation Sans', sans-serif;-webkit-text-stroke:0.35px;letter-spacing:0.718px;">Scratches and Consoles</span>
<svg style="left:1018px;top:106.1px;overflow:visible;" width="32" height="32" viewBox="0 0 16 16" fill="none"><circle cx="8" cy="8" r="6.5" fill="#25324d" stroke="#548af7" stroke-width="1.1"/><path d="M10.55 6.1 A3.3 3.45 0 1 0 10.55 9.9" stroke="#548af7" stroke-width="1.15" stroke-linecap="round"/><path d="M9.55 0.8 V7.0 L15.4 3.9 Z" fill="#253627" stroke="#1e1f22" stroke-width="3" stroke-linejoin="round"/><path d="M9.55 0.8 V7.0 L15.4 3.9 Z" fill="#253627" stroke="#57965c" stroke-width="1.05" stroke-linejoin="round"/></svg>
<span id="t27" class="t" style="left:1060.00px;top:103.0px;line-height:40px;font-size:26px;color:#dfe1e5;font-family:'Liberation Sans', sans-serif;-webkit-text-stroke:0.35px;letter-spacing:0.562px;">HelloWorld.java</span>
<svg style="left:1275.0px;top:115.4px;" width="14" height="14" viewBox="0 0 14 14" fill="none"><path d="M1 1 L13 13 M13 1 L1 13" stroke="#6f737a" stroke-width="2" stroke-linecap="round"/></svg>
<div style="left:994px;top:162px;width:2753px;height:2px;background:#393b40;"></div>
<div style="left:994px;top:156px;width:320px;height:8px;background:#3574f0;border-radius:4px;"></div>
<svg style="left:3704.5px;top:109.2px;" width="6.6" height="26.4" viewBox="0 0 6.6 26.4" fill="none"><circle cx="3.3" cy="3.3" r="2.3" fill="#ced0d6"/><circle cx="3.3" cy="13.2" r="2.3" fill="#ced0d6"/><circle cx="3.3" cy="23.1" r="2.3" fill="#ced0d6"/></svg>
<div style="left:992px;top:472px;width:2755px;height:44px;background:#26282e;"></div>
<div style="left:1122px;top:164px;width:2px;height:1224px;background:#313438;"></div>
<div style="left:3000px;top:164px;width:2px;height:1224px;background:#36383c;"></div>
<div style="left:1186px;top:340px;width:2px;height:44px;background:#393b40;"></div>
<span class="t" style="left:989.5px;width:60px;text-align:right;top:166.6px;line-height:44px;font-size:25px;color:#4b5059;font-family:'DejaVu Sans Mono', 'Liberation Mono', monospace;letter-spacing:-0.0533px;-webkit-text-stroke:0.3px;">1</span>
<span class="t" style="left:1128px;top:165.0px;line-height:44px;font-size:26px;color:#bcbec4;font-family:'DejaVu Sans Mono', 'Liberation Mono', monospace;letter-spacing:-0.0533px;-webkit-text-stroke:0.3px;"><span style="color:#cf8e6d;">package</span> com.example.helloworld;</span>
<span class="t" style="left:989.5px;width:60px;text-align:right;top:210.6px;line-height:44px;font-size:25px;color:#4b5059;font-family:'DejaVu Sans Mono', 'Liberation Mono', monospace;letter-spacing:-0.0533px;-webkit-text-stroke:0.3px;">2</span>
<span class="t" style="left:989.5px;width:60px;text-align:right;top:254.6px;line-height:44px;font-size:25px;color:#4b5059;font-family:'DejaVu Sans Mono', 'Liberation Mono', monospace;letter-spacing:-0.0533px;-webkit-text-stroke:0.3px;">3</span>
<span class="t" style="left:1128px;top:253.0px;line-height:44px;font-size:26px;color:#bcbec4;font-family:'DejaVu Sans Mono', 'Liberation Mono', monospace;letter-spacing:-0.0533px;-webkit-text-stroke:0.3px;"><span style="color:#cf8e6d;">public class</span> HelloWorld <span style="position:relative;top:-1.5px">{</span></span>
<span class="t" style="left:989.5px;width:60px;text-align:right;top:298.6px;line-height:44px;font-size:25px;color:#4b5059;font-family:'DejaVu Sans Mono', 'Liberation Mono', monospace;letter-spacing:-0.0533px;-webkit-text-stroke:0.3px;">4</span>
<span class="t" style="left:1128px;top:297.0px;line-height:44px;font-size:26px;color:#bcbec4;font-family:'DejaVu Sans Mono', 'Liberation Mono', monospace;letter-spacing:-0.0533px;-webkit-text-stroke:0.3px;">    <span style="color:#cf8e6d;">public static void</span> <span style="color:#56a8f5;">main</span><span style="position:relative;top:-1.5px">(</span>String<span style="position:relative;top:-1.5px">[]</span> args<span style="position:relative;top:-1.5px">)</span> <span style="position:relative;top:-1.5px">{</span></span>
<span class="t" style="left:989.5px;width:60px;text-align:right;top:342.6px;line-height:44px;font-size:25px;color:#4b5059;font-family:'DejaVu Sans Mono', 'Liberation Mono', monospace;letter-spacing:-0.0533px;-webkit-text-stroke:0.3px;">5</span>
<span class="t" style="left:1128px;top:341.0px;line-height:44px;font-size:26px;color:#bcbec4;font-family:'DejaVu Sans Mono', 'Liberation Mono', monospace;letter-spacing:-0.0533px;-webkit-text-stroke:0.3px;">        System.<span style="color:#c77dbb;font-style:italic;">out</span>.println<span style="position:relative;top:-1.5px">(</span><span style="color:#6aab73;">"Hello World"</span><span style="position:relative;top:-1.5px">)</span>;</span>
<span class="t" style="left:989.5px;width:60px;text-align:right;top:386.6px;line-height:44px;font-size:25px;color:#4b5059;font-family:'DejaVu Sans Mono', 'Liberation Mono', monospace;letter-spacing:-0.0533px;-webkit-text-stroke:0.3px;">6</span>
<span class="t" style="left:1128px;top:385.0px;line-height:44px;font-size:26px;color:#bcbec4;font-family:'DejaVu Sans Mono', 'Liberation Mono', monospace;letter-spacing:-0.0533px;-webkit-text-stroke:0.3px;">    <span style="position:relative;top:-1.5px">}</span></span>
<span class="t" style="left:989.5px;width:60px;text-align:right;top:430.6px;line-height:44px;font-size:25px;color:#4b5059;font-family:'DejaVu Sans Mono', 'Liberation Mono', monospace;letter-spacing:-0.0533px;-webkit-text-stroke:0.3px;">7</span>
<span class="t" style="left:1128px;top:429.0px;line-height:44px;font-size:26px;color:#bcbec4;font-family:'DejaVu Sans Mono', 'Liberation Mono', monospace;letter-spacing:-0.0533px;-webkit-text-stroke:0.3px;"><span style="position:relative;top:-1.5px">}</span></span>
<span class="t" style="left:989.5px;width:60px;text-align:right;top:474.6px;line-height:44px;font-size:25px;color:#a1a3ab;font-family:'DejaVu Sans Mono', 'Liberation Mono', monospace;letter-spacing:-0.0533px;-webkit-text-stroke:0.3px;">8</span>
<svg style="left:1059.7px;top:257.8px;" width="32" height="32" viewBox="0 0 16 16" fill="none"><path d="M2.3 2.6 C2.3 1.9 3 1.5 3.6 1.85 L13.6 7.35 C14.2 7.7 14.2 8.5 13.6 8.85 L3.6 14.35 C3 14.7 2.3 14.3 2.3 13.6 Z" fill="#253627" stroke="#5fad65" stroke-width="1.2" stroke-linejoin="round" transform="translate(8 8) scale(0.93) translate(-8 -8)"/></svg>
<svg style="left:1059.7px;top:301.8px;" width="32" height="32" viewBox="0 0 16 16" fill="none"><path d="M2.3 2.6 C2.3 1.9 3 1.5 3.6 1.85 L13.6 7.35 C14.2 7.7 14.2 8.5 13.6 8.85 L3.6 14.35 C3 14.7 2.3 14.3 2.3 13.6 Z" fill="#253627" stroke="#5fad65" stroke-width="1.2" stroke-linejoin="round" transform="translate(8 8) scale(0.93) translate(-8 -8)"/></svg>
<svg style="left:1140px;top:428px;" width="32" height="32" viewBox="0 0 32 32" fill="none"><circle cx="16" cy="10.9" r="9.8" fill="#f2c55c"/><path d="M9.6 16 L11.1 21.7 H20.9 L22.4 16 Z" fill="#f2c55c"/><path d="M11.2 24.8 H20.8 M12.1 28.6 H19.9" stroke="#ced0d6" stroke-width="2.1"/></svg>
<svg style="left:3717.5px;top:170.5px;" width="25" height="20" viewBox="-1 -1 23 18.4" fill="none"><path d="M1.2 9.2 L6.6 14.4 L19.6 1.4" stroke="#4e9a55" stroke-width="3.4" stroke-linecap="butt" stroke-linejoin="miter"/></svg>
<span id="t28" class="t" style="left:93.70px;top:1413.0px;line-height:40px;font-size:27px;color:#dfe1e5;font-family:'Liberation Sans', sans-serif;font-weight:700;letter-spacing:-1.546px;">Run</span>
<svg style="left:198px;top:1416px;" width="32" height="32" viewBox="0 0 16 16" fill="none"><rect x="2.5" y="2.5" width="11" height="11" rx="2" fill="#25324d" stroke="#456aa8" stroke-width="1.1"/><rect x="6.25" y="4.3" width="1.9" height="1.9" fill="#456aa8"/><rect x="8.1" y="6.2" width="1.9" height="1.9" fill="#456aa8"/><rect x="6.25" y="8.1" width="1.9" height="1.9" fill="#456aa8"/><rect x="8.1" y="9.95" width="1.9" height="1.9" fill="#456aa8"/></svg>
<span id="t29" class="t" style="left:237.10px;top:1414.0px;line-height:40px;font-size:26px;color:#dfe1e5;font-family:'Liberation Sans', sans-serif;-webkit-text-stroke:0.35px;letter-spacing:0.674px;">HelloWorldJAR</span>
<svg style="left:444.5px;top:1427.0px;" width="14" height="14" viewBox="0 0 14 14" fill="none"><path d="M1 1 L13 13 M13 1 L1 13" stroke="#868a91" stroke-width="2" stroke-linecap="round"/></svg>
<div style="left:70px;top:1472px;width:3676px;height:2px;background:#1e1f22;"></div>
<div style="left:174.3px;top:1468px;width:307.8px;height:6px;background:#63666d;border-radius:3px;"></div>
<svg style="left:3648.2999999999997px;top:1418.3px;" width="6.6" height="27.4" viewBox="0 0 6.6 27.4" fill="none"><circle cx="3.3" cy="3.3" r="2.3" fill="#ced0d6"/><circle cx="3.3" cy="13.7" r="2.3" fill="#ced0d6"/><circle cx="3.3" cy="24.1" r="2.3" fill="#ced0d6"/></svg>
<div style="left:3691px;top:1431px;width:26px;height:2px;background:#ced0d6;"></div>
<svg style="left:93px;top:1491px;" width="32" height="32" viewBox="0 0 16 16" fill="none"><g stroke="#ced0d6" stroke-width="1.1" stroke-linecap="butt" stroke-linejoin="miter" fill="none"><path d="M12.85 6.27 A5.65 5.65 0 1 0 7.40 14.24"/><path d="M12.95 1.6 V6.1 H8.7"/></g><path d="M9.6 9.7 V15.5 L14.7 12.6 Z" fill="#253627" stroke="#57a35d" stroke-width="1.1" stroke-linejoin="round"/></svg>
<div style="left:150px;top:1496px;width:24px;height:24px;background:#5a5a5b;border-radius:4px;"></div>
<div style="left:194px;top:1488px;width:2px;height:40px;background:#43454a;"></div>
<svg style="left:224.85px;top:1494.75px;" width="6.3" height="26.5" viewBox="0 0 6.3 26.5" fill="none"><circle cx="3.15" cy="3.15" r="2.15" fill="#ced0d6"/><circle cx="3.15" cy="13.25" r="2.15" fill="#ced0d6"/><circle cx="3.15" cy="23.349999999999998" r="2.15" fill="#ced0d6"/></svg>
<div style="left:146px;top:1542px;width:3600px;height:557px;background:#1e1f22;"></div>
<div style="left:70px;top:1542px;width:76px;height:2px;background:#1e1f22;"></div>
<span class="t" style="left:170.5px;width:3575.5px;overflow:hidden;top:1545.4px;line-height:44px;font-size:26px;color:#bcbec4;font-family:'DejaVu Sans Mono', 'Liberation Mono', monospace;letter-spacing:-0.0533px;-webkit-text-stroke:0.3px;">/Users/helenscott/Library/Java/JavaVirtualMachines/openjdk-21.0.1/Contents/Home/bin/java -Dfile.encoding=UTF-8 -Dsun.stdout.encoding=UTF-8 -Dsun.stderr.encoding=UTF-8 -jar /Users/helenscott/IdeaProjects/HelloWorld/out/artifacts/HelloWorld_jar/HelloWorld.jar</span>
<span class="t" style="left:170.5px;width:3575.5px;overflow:hidden;top:1589.4px;line-height:44px;font-size:26px;color:#bcbec4;font-family:'DejaVu Sans Mono', 'Liberation Mono', monospace;letter-spacing:-0.0533px;-webkit-text-stroke:0.3px;">Hello World</span>
<span class="t" style="left:170.5px;width:3575.5px;overflow:hidden;top:1677.4px;line-height:44px;font-size:26px;color:#bcbec4;font-family:'DejaVu Sans Mono', 'Liberation Mono', monospace;letter-spacing:-0.0533px;-webkit-text-stroke:0.3px;">Process finished with exit code 0</span>
<svg style="left:92px;top:1564px;" width="32" height="32" viewBox="0 0 16 16" fill="none"><g stroke="#68696c" stroke-width="1.05" stroke-linecap="round" stroke-linejoin="round" fill="none"><path d="M8 13.5 V2.8 M3.8 7 L8 2.8 L12.2 7"/></g></svg>
<svg style="left:92px;top:1616px;" width="32" height="32" viewBox="0 0 16 16" fill="none"><g stroke="#68696c" stroke-width="1.05" stroke-linecap="round" stroke-linejoin="round" fill="none"><path d="M8 2.5 V13.2 M3.8 9 L8 13.2 L12.2 9"/></g></svg>
<svg style="left:92px;top:1668px;" width="32" height="32" viewBox="0 0 16 16" fill="none"><g stroke="#ced0d6" stroke-width="1.05" stroke-linecap="round" stroke-linejoin="round" fill="none"><path d="M1.5 3 H14.5 M1.5 11.5 H5.5 M1.5 7.2 H11.8 C13.3 7.2 14.4 8.2 14.4 9.4 C14.4 10.6 13.3 11.5 11.8 11.5 H8.6 M10.4 9.4 L8.4 11.5 L10.4 13.6"/></g></svg>
<svg style="left:92px;top:1720px;" width="32" height="32" viewBox="0 0 16 16" fill="none"><g stroke="#ced0d6" stroke-width="1.05" stroke-linecap="round" stroke-linejoin="round" fill="none"><path d="M1.5 3 H6.5 M1.5 7.5 H6.5 M1.5 13.5 H14.5 M11 2 V10.6 M7.8 7.6 L11 10.8 L14.2 7.6"/></g></svg>
<svg style="left:92px;top:1772px;" width="32" height="32" viewBox="0 0 16 16" fill="none"><g stroke="#68696c" stroke-width="1.05" stroke-linecap="round" stroke-linejoin="round" fill="none"><path d="M4.5 5 V2 H11.5 V5 M4.5 11 H3 C2.2 11 1.5 10.3 1.5 9.5 V6.5 C1.5 5.7 2.2 5 3 5 H13 C13.8 5 14.5 5.7 14.5 6.5 V9.5 C14.5 10.3 13.8 11 13 11 H11.5 M4.5 9 H11.5 V14 H4.5 Z"/></g></svg>
<svg style="left:92px;top:1824px;" width="32" height="32" viewBox="0 0 16 16" fill="none"><g stroke="#ced0d6" stroke-width="1.05" stroke-linecap="round" stroke-linejoin="round" fill="none"><path d="M2.2 4.6 H13.8 M5.6 4.4 C5.6 3 6.6 2 8 2 C9.4 2 10.4 3 10.4 4.4 M3.4 4.8 L3.9 12.6 C4 13.4 4.6 14 5.4 14 H10.6 C11.4 14 12 13.4 12.1 12.6 L12.6 4.8 M6.7 7.2 V11.4 M9.3 7.2 V11.4"/></g></svg>
<svg style="left:16px;top:2120.5px;" width="16" height="16" viewBox="0 0 16 16" fill="none"><rect x="1.2" y="1.2" width="13.6" height="13.6" rx="3" fill="#25324d" stroke="#548af7" stroke-width="2.2"/></svg>
<span id="t30" class="t" style="left:39.70px;top:2109.0px;line-height:40px;font-size:26px;color:#a1a3ab;font-family:'Liberation Sans', sans-serif;-webkit-text-stroke:0.35px;letter-spacing:0.754px;">HelloWorld</span>
<span id="t31" class="t" style="left:225.70px;top:2109.0px;line-height:40px;font-size:26px;color:#a1a3ab;font-family:'Liberation Sans', sans-serif;-webkit-text-stroke:0.35px;letter-spacing:-0.329px;">src</span>
<span id="t32" class="t" style="left:310.90px;top:2109.0px;line-height:40px;font-size:26px;color:#a1a3ab;font-family:'Liberation Sans', sans-serif;-webkit-text-stroke:0.35px;letter-spacing:1.170px;">com</span>
<span id="t33" class="t" style="left:412.30px;top:2109.0px;line-height:40px;font-size:26px;color:#a1a3ab;font-family:'Liberation Sans', sans-serif;-webkit-text-stroke:0.35px;letter-spacing:0.564px;">example</span>
<span id="t34" class="t" style="left:564.30px;top:2109.0px;line-height:40px;font-size:26px;color:#a1a3ab;font-family:'Liberation Sans', sans-serif;-webkit-text-stroke:0.35px;letter-spacing:0.977px;">helloworld</span>
<svg style="left:194.25px;top:2120.8px;" width="10.5" height="15" viewBox="0 0 10.5 15" fill="none"><path d="M1.2 1.2 L8.5 7.5 L1.2 13.8" stroke="#9194a0" stroke-width="2" stroke-linecap="round" stroke-linejoin="round"/></svg>
<svg style="left:280.25px;top:2120.8px;" width="10.5" height="15" viewBox="0 0 10.5 15" fill="none"><path d="M1.2 1.2 L8.5 7.5 L1.2 13.8" stroke="#9194a0" stroke-width="2" stroke-linecap="round" stroke-linejoin="round"/></svg>
<svg style="left:382.25px;top:2120.8px;" width="10.5" height="15" viewBox="0 0 10.5 15" fill="none"><path d="M1.2 1.2 L8.5 7.5 L1.2 13.8" stroke="#9194a0" stroke-width="2" stroke-linecap="round" stroke-linejoin="round"/></svg>
<svg style="left:534.85px;top:2120.8px;" width="10.5" height="15" viewBox="0 0 10.5 15" fill="none"><path d="M1.2 1.2 L8.5 7.5 L1.2 13.8" stroke="#9194a0" stroke-width="2" stroke-linecap="round" stroke-linejoin="round"/></svg>
<svg style="left:710.75px;top:2120.8px;" width="10.5" height="15" viewBox="0 0 10.5 15" fill="none"><path d="M1.2 1.2 L8.5 7.5 L1.2 13.8" stroke="#9194a0" stroke-width="2" stroke-linecap="round" stroke-linejoin="round"/></svg>
<svg style="left:740px;top:2112.5px;overflow:visible;" width="32" height="32" viewBox="0 0 16 16" fill="none"><circle cx="8" cy="8" r="6.5" fill="#25324d" stroke="#548af7" stroke-width="1.1"/><path d="M10.55 6.1 A3.3 3.45 0 1 0 10.55 9.9" stroke="#548af7" stroke-width="1.15" stroke-linecap="round"/><path d="M9.55 0.8 V7.0 L15.4 3.9 Z" fill="#253627" stroke="#2b2d30" stroke-width="3" stroke-linejoin="round"/><path d="M9.55 0.8 V7.0 L15.4 3.9 Z" fill="#253627" stroke="#57965c" stroke-width="1.05" stroke-linejoin="round"/></svg>
<span id="t35" class="t" style="left:779.60px;top:2109.0px;line-height:40px;font-size:26px;color:#a1a3ab;font-family:'Liberation Sans', sans-serif;-webkit-text-stroke:0.35px;letter-spacing:0.765px;">HelloWorld</span>
<span id="t36" class="t" style="left:3246.00px;top:2109.0px;line-height:40px;font-size:26px;color:#a1a3ab;font-family:'Liberation Sans', sans-serif;-webkit-text-stroke:0.35px;letter-spacing:-1.392px;">8:1</span>
<svg style="left:3313px;top:2114.8px;" width="32" height="32" viewBox="0 0 16 16" fill="none"><path d="M14.2 2.1 C8 2.1 2.1 4 2.1 8.8 C2.1 11.7 4.3 13.9 7.1 13.9 C12.6 13.9 14.4 8 14.2 2.1 Z" stroke="#ced0d6" stroke-width="0.95" stroke-linejoin="round"/></svg>
<svg style="left:3374.1px;top:2110px;" width="40" height="40" viewBox="0 0 20 20" fill="none"><path d="M4.91 5.36 C5.25 5.22 6.29 4.69 6.95 4.50 C7.60 4.32 8.19 4.25 8.85 4.23 C9.50 4.22 10.20 4.24 10.88 4.41 C11.56 4.57 12.33 4.87 12.92 5.22 C13.51 5.57 14.02 6.03 14.41 6.51 C14.80 7.00 15.08 7.58 15.25 8.14 C15.43 8.71 15.47 9.34 15.46 9.90 C15.44 10.47 15.37 11.08 15.16 11.53 C14.95 11.99 14.63 12.36 14.21 12.62 C13.79 12.88 13.20 13.01 12.65 13.09 C12.09 13.18 11.45 13.17 10.88 13.13 C10.32 13.10 9.72 13.06 9.25 12.89 C8.79 12.73 8.40 12.46 8.10 12.14 C7.80 11.83 7.54 11.36 7.45 10.99 C7.35 10.62 7.40 10.20 7.53 9.93 C7.66 9.67 7.96 9.48 8.24 9.40 C8.51 9.33 8.89 9.40 9.19 9.50 C9.48 9.60 9.86 9.92 10.00 10.00 M15.09 14.64 C14.75 14.78 13.71 15.31 13.05 15.50 C12.40 15.68 11.81 15.75 11.15 15.77 C10.50 15.78 9.80 15.76 9.12 15.59 C8.44 15.43 7.67 15.13 7.08 14.78 C6.49 14.43 5.98 13.97 5.59 13.49 C5.20 13.00 4.92 12.42 4.75 11.86 C4.57 11.29 4.53 10.66 4.54 10.10 C4.56 9.53 4.63 8.92 4.84 8.47 C5.05 8.01 5.37 7.64 5.79 7.38 C6.21 7.12 6.80 6.99 7.35 6.91 C7.91 6.82 8.55 6.83 9.12 6.87 C9.68 6.90 10.28 6.94 10.75 7.11 C11.21 7.27 11.60 7.54 11.90 7.86 C12.20 8.17 12.46 8.64 12.55 9.01 C12.65 9.38 12.60 9.80 12.47 10.07 C12.34 10.33 12.04 10.52 11.76 10.60 C11.49 10.67 11.11 10.60 10.81 10.50 C10.52 10.40 10.14 10.08 10.00 10.00" stroke="#ced0d6" stroke-width="1.0" stroke-linecap="round" fill="none"/></svg>
<span id="t37" class="t" style="left:3441.50px;top:2109.0px;line-height:40px;font-size:26px;color:#a1a3ab;font-family:'Liberation Sans', sans-serif;-webkit-text-stroke:0.35px;letter-spacing:-0.460px;">LF</span>
<span id="t38" class="t" style="left:3503.50px;top:2109.0px;line-height:40px;font-size:26px;color:#a1a3ab;font-family:'Liberation Sans', sans-serif;-webkit-text-stroke:0.35px;letter-spacing:1.325px;">UTF-8</span>
<span id="t39" class="t" style="left:3617.50px;top:2109.0px;line-height:40px;font-size:26px;color:#a1a3ab;font-family:'Liberation Sans', sans-serif;-webkit-text-stroke:0.35px;letter-spacing:0.677px;">4 spaces</span>
<svg style="left:3762px;top:2112px;" width="32" height="32" viewBox="0 0 16 16" fill="none"><g stroke="#ced0d6" stroke-width="1.0" stroke-linecap="round" stroke-linejoin="round" fill="none"><rect x="2.5" y="7.35" width="9.1" height="7.15" rx="1.7"/><path d="M9.6 7.2 V5.6 C9.6 4.2 10.7 3.2 12.05 3.2 C13.4 3.2 14.5 4.2 14.5 5.6 V6.4 M7.25 9.8 V12.2"/></g></svg>
</div></body></html>
